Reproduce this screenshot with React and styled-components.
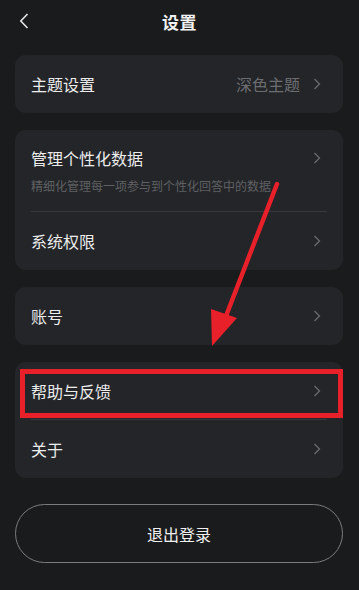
import React from "react";
import styled, { createGlobalStyle } from "styled-components";

const GlobalStyle = createGlobalStyle`
    html, body {
        margin: 0;
        padding: 0;
        background: #1a1b1d;
    }
    body {
        font-family: "Noto Sans CJK SC", "Noto Sans", sans-serif;
        color: #ececec;
    }
`;

function Chevron() {
    return (
        <svg width="8" height="12" viewBox="0 0 8 12" fill="none">
            <path d="M1.5 1 L6.5 6 L1.5 11" stroke="#6a6b6e" strokeWidth="1.3" />
        </svg>
    );
}

function Row({ title, value, sub, divider, highlight }) {
    return (
        <StyledRow $divider={divider} $sub={!!sub}>
            <StyledRowMain>
                <StyledTitle>{title}</StyledTitle>
                <StyledRight>
                    {value && <StyledValue>{value}</StyledValue>}
                    <Chevron />
                </StyledRight>
            </StyledRowMain>
            {sub && <StyledSub>{sub}</StyledSub>}
            {highlight && <StyledHighlight />}
        </StyledRow>
    );
}

export default function App() {
    return (
        <StyledPage>
            <GlobalStyle />
            <StyledHeader>
                <StyledBack>
                    <svg width="10" height="16" viewBox="0 0 10 16" fill="none">
                        <path d="M8.5 1 L1.8 8 L8.5 15" stroke="#e6e6e6" strokeWidth="1.6" />
                    </svg>
                </StyledBack>
                <StyledHeading>设置</StyledHeading>
            </StyledHeader>

            <StyledList>
                <StyledCard>
                    <Row title="主题设置" value="深色主题" />
                </StyledCard>
                <StyledCard>
                    <Row
                        title="管理个性化数据"
                        sub="精细化管理每一项参与到个性化回答中的数据"
                        divider
                    />
                    <Row title="系统权限" />
                </StyledCard>
                <StyledCard>
                    <Row title="账号" />
                </StyledCard>
                <StyledCard>
                    <Row title="帮助与反馈" divider highlight />
                    <Row title="关于" />
                </StyledCard>
            </StyledList>

            <StyledLogout>退出登录</StyledLogout>

            <StyledArrow width="359" height="590" viewBox="0 0 359 590">
                <line x1="277" y1="184" x2="226" y2="316" stroke="#e8202a" strokeWidth="4.5" strokeLinecap="round" />
                <polygon points="212,346 211,309 237,318" fill="#e8202a" />
            </StyledArrow>
        </StyledPage>
    );
}

const StyledPage = styled.div`
    position: relative;
    width: 359px;
    height: 590px;
    overflow: hidden;
    background: #1a1b1d;
`;

const StyledHeader = styled.div`
    position: relative;
    height: 42px;
    display: flex;
    align-items: center;
    justify-content: center;
`;

const StyledBack = styled.div`
    position: absolute;
    left: 19px;
    top: 13px;
    display: flex;
`;

const StyledHeading = styled.div`
    font-size: 17px;
    font-weight: 700;
    color: #f2f2f2;
    letter-spacing: 0.5px;
`;

const StyledList = styled.div`
    display: flex;
    flex-direction: column;
    gap: 17px;
    padding: 13px 16px 0 15px;
`;

const StyledCard = styled.div`
    background: #242529;
    border-radius: 11px;
    padding: 0 16px 0 16px;
`;

const StyledRow = styled.div`
    position: relative;
    display: flex;
    flex-direction: column;
    justify-content: center;
    min-height: 58px;
    padding: ${(p) => (p.$sub ? "17px 0 16px" : "0")};
    box-sizing: border-box;
    border-bottom: ${(p) => (p.$divider ? "1px solid #38393d" : "none")};
`;

const StyledRowMain = styled.div`
    display: flex;
    align-items: center;
    justify-content: space-between;
`;

const StyledTitle = styled.div`
    font-size: 16px;
    line-height: 22px;
    color: #ececec;
`;

const StyledRight = styled.div`
    display: flex;
    align-items: center;
    gap: 13px;
    padding-right: 6px;
`;

const StyledValue = styled.div`
    font-size: 16px;
    color: #6c6d70;
`;

const StyledSub = styled.div`
    margin-top: 8px;
    font-size: 12px;
    line-height: 18px;
    color: #5f6063;
`;

const StyledHighlight = styled.div`
    position: absolute;
    top: 7px;
    left: -11px;
    right: -16px;
    bottom: 1px;
    border: 5.5px solid #e8202a;
    pointer-events: none;
`;

const StyledLogout = styled.div`
    margin: 26px 16px 0 15px;
    height: 59px;
    box-sizing: border-box;
    border: 1.2px solid #7b7c7f;
    border-radius: 30px;
    display: flex;
    align-items: center;
    justify-content: center;
    font-size: 16px;
    color: #f0f0f0;
`;

const StyledArrow = styled.svg`
    position: absolute;
    left: 0;
    top: 0;
    pointer-events: none;
`;
